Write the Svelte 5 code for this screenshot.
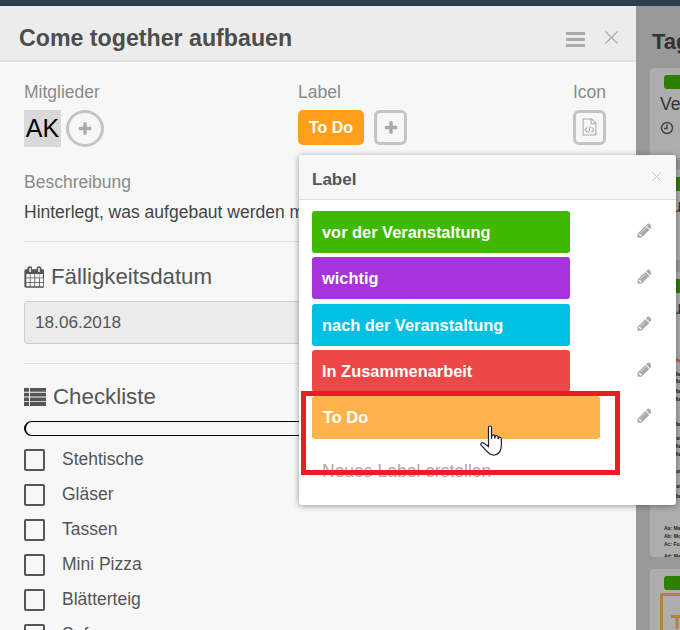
<script>
	const labels = [
		{ name: 'vor der Veranstaltung', color: '#3fb800' },
		{ name: 'wichtig', color: '#a832dc' },
		{ name: 'nach der Veranstaltung', color: '#00c1e4' },
		{ name: 'In Zusammenarbeit', color: '#ed4848' },
		{ name: 'To Do', color: '#ffb34d', hover: true }
	];
	const items = ['Stehtische', 'Gläser', 'Tassen', 'Mini Pizza', 'Blätterteig', 'Sofa'];
	// tiny lines of the card behind the popover, gap = px above the line
	const notes = [
		{ text: 'Wichtig: Abbau', gap: 0, red: true },
		{ text: 'Aa: Material', gap: 9 },
		{ text: 'Ab: Material', gap: 2 },
		{ text: 'Ac: Material', gap: 5 },
		{ text: 'Ad: Material', gap: 3 },
		{ text: 'Ae: Material', gap: 20 },
		{ text: 'Af: Material', gap: 9 },
		{ text: 'Ag: Material', gap: 3 },
		{ text: 'Ah: Material', gap: 3 },
		{ text: 'Ai: Material', gap: 12 },
		{ text: 'Aj: Material', gap: 10 },
		{ text: 'Ak: Material', gap: 5 },
		{ text: 'Aa: Ma', gap: 27 },
		{ text: 'Ab: Mo', gap: 3 },
		{ text: 'Ac: Fu', gap: 3 },
		{ text: 'Ad: Me', gap: 7 }
	];
	const pencil = 'M491 1536l91-91-235-235-91 91v107h128v128h107zm523-928q0-22-22-22-10 0-17 7l-542 542q-7 7-7 17 0 22 22 22 10 0 17-7l542-542q7-7 7-17zm-54-192l416 416-832 832h-416v-416zm683 96q0 53-37 90l-166 166-416-416 166-165q36-38 90-38 53 0 91 38l235 234q37 39 37 91z';
	const plus = 'M1600 736v192q0 40-28 68t-68 28h-416v416q0 40-28 68t-68 28h-192q-40 0-68-28t-28-68v-416h-416q-40 0-68-28t-28-68v-192q0-40 28-68t68-28h416v-416q0-40 28-68t68-28h192q40 0 68 28t28 68v416h416q40 0 68 28t28 68z';
	const calendar = 'M192 1664h288v-288h-288v288zm352 0h320v-288h-320v288zm-352-352h288v-320h-288v320zm352 0h320v-320h-320v320zm-352-384h288v-288h-288v288zm736 736h320v-288h-320v288zm-384-736h320v-288h-320v288zm768 736h288v-288h-288v288zm-384-352h320v-320h-320v320zm-352-864v-288q0-13-9.5-22.5t-22.5-9.5h-64q-13 0-22.5 9.5t-9.5 22.5v288q0 13 9.5 22.5t22.5 9.5h64q13 0 22.5-9.5t9.5-22.5zm736 864h288v-320h-288v320zm-384-384h320v-288h-320v288zm352 0h288v-288h-288v288zm32-480v-288q0-13-9.5-22.5t-22.5-9.5h-64q-13 0-22.5 9.5t-9.5 22.5v288q0 13 9.5 22.5t22.5 9.5h64q13 0 22.5-9.5t9.5-22.5zm384-64v1280q0 52-38 90t-90 38h-1408q-52 0-90-38t-38-90v-1280q0-52 38-90t90-38h128v-96q0-66 47-113t113-47h64q66 0 113 47t47 113v96h384v-96q0-66 47-113t113-47h64q66 0 113 47t47 113v96h128q52 0 90 38t38 90z';
</script>

<div class="page">
	<div class="topbar"></div>
	<div class="main">
		<section class="modal">
			<header class="modal-head">
				<h2>Come together aufbauen</h2>
				<svg class="burger" viewBox="0 0 19 15" width="19" height="15"><rect width="19" height="3" /><rect y="6" width="19" height="3" /><rect y="12" width="19" height="3" /></svg>
				<svg class="close" viewBox="0 0 13 13" width="13" height="13"><path d="M.5.5l12 12M12.5.5l-12 12" /></svg>
			</header>

			<div class="modal-body">
				<div class="meta">
					<div>
						<div class="meta-title">Mitglieder</div>
						<div class="meta-row">
							<span class="avatar">AK</span>
							<button class="add round" aria-label="Mitglied"><svg viewBox="0 0 1792 1792" width="16" height="16"><path d={plus} /></svg></button>
						</div>
					</div>
					<div>
						<div class="meta-title">Label</div>
						<div class="meta-row wide">
							<span class="chip">To Do</span>
							<button class="add" aria-label="Label"><svg viewBox="0 0 1792 1792" width="16" height="16"><path d={plus} /></svg></button>
						</div>
					</div>
					<div>
						<div class="meta-title">Icon</div>
						<div class="meta-row">
							<button class="add" aria-label="Icon">
								<svg viewBox="0 0 14 16" width="15" height="18" class="file">
									<path d="M1 .5h8l4 4v11H1z" />
									<path d="M8.500 .5v4.500H13" />
									<path d="M5 8l-2 2.500L5 13M9 8l2 2.500L9 13M7.800 7.500l-1.600 6" />
								</svg>
							</button>
						</div>
					</div>
				</div>

				<div class="desc">
					<div class="meta-title">Beschreibung</div>
					<p>Hinterlegt, was aufgebaut werden muss</p>
				</div>

				<div class="block">
					<h3>
						<svg viewBox="0 0 1664 1792" width="20" height="22"><path d={calendar} /></svg>
						Fälligkeitsdatum
					</h3>
					<div class="date">18.06.2018</div>
				</div>

				<div class="block check">
					<h3>
						<svg viewBox="0 0 22 18" width="22" height="18"><path d="M0 0h5v3.800H0zM6 0h16v3.800H6zM0 4.700h5v3.800H0zM6 4.700h16v3.800H6zM0 9.400h5v3.800H0zM6 9.400h16v3.800H6zM0 14.100h5v3.900H0zM6 14.100h16v3.900H6z" /></svg>
						Checkliste
					</h3>
					<div class="progress"></div>
					<ul>
						{#each items as item}
							<li><span class="box"></span>{item}</li>
						{/each}
					</ul>
				</div>
			</div>
		</section>

		<aside class="board">
			<h2>Tag</h2>
			<div class="card first">
				<span class="tag"></span>
				<div class="card-title">Ve</div>
				<svg class="clock" viewBox="0 0 14 14" width="14" height="14"><circle cx="7" cy="7" r="5.500" /><path d="M7 3.500V7.500H4" /></svg>
			</div>
			<div class="card second">
				<span class="tag"></span>
				<div class="card-title">Aufbau</div>
			</div>
			<div class="card third">
				<span class="tag"></span>
				<div class="card-title">Aufbau</div>
				<div class="tiny">
					{#each notes as note}
						<span class:red={note.red} style="margin-top: {note.gap}px">{note.text}</span>
					{/each}
				</div>
			</div>
			<div class="card fourth">
				<span class="tag"></span>
				<div class="frame"><svg viewBox="0 0 12 14" width="12" height="14"><path d="M0 0h12v3H7.500v11h-3V3H0z" /></svg></div>
			</div>
		</aside>
	</div>

	<div class="popover">
		<div class="pop-head">
			<strong>Label</strong>
			<svg viewBox="0 0 9 9" width="9" height="9"><path d="M.5.5l8 8M8.500.5l-8 8" /></svg>
		</div>
		<div class="pop-body">
			{#each labels as label}
				<div class="label-row">
					<div class="label-bar" class:hover={label.hover} style="background: {label.color}">{label.name}</div>
					<svg viewBox="0 0 1515 1792" width="15" height="17"><path d={pencil} /></svg>
				</div>
			{/each}
			<div class="new-label">Neues Label erstellen</div>
		</div>
		<div class="callout"></div>
		<svg class="hand" viewBox="0 0 26 33" width="26" height="33">
			<path d="M8.500 2.500c0-2 3-2 3 0v11.500l.3-3c.2-1.600 2.900-1.400 2.900.3l.1 2.200.4-1.800c.3-1.500 2.800-1.200 2.800.4l.1 1.900.5-1.100c.5-1.100 2.500-.8 2.600.6.300 3 .3 7.500-.4 10.500-.8 3.300-2.500 5.500-6.300 6-3.500.5-5.400-1-7.300-3.300L1.300 20.300c-1.300-1.500.6-3.400 2.300-2.400L8.500 21.500z" />
		</svg>
	</div>
</div>

<style>
	:global(body) {
		margin: 0;
		font-family: "Liberation Sans", Arial, sans-serif;
	}

	.page {
		position: relative;
		width: 680px;
		height: 630px;
		overflow: hidden;
		background: #999;
	}

	.topbar {
		height: 6px;
		background: #2c3e50;
	}

	.main {
		display: flex;
		height: 624px;
	}

	.modal {
		flex: 0 0 636px;
		background: #f7f7f7;
		color: #555;
		overflow: hidden;
	}

	.modal-head {
		display: flex;
		align-items: center;
		height: 56px;
		padding: 8px 18px 0 19px;
		background: #ececec;
		border-bottom: 2px solid #e0e0e0;
		box-sizing: border-box;
	}

	.modal-head h2 {
		flex: 1;
		margin: 4px 0 0;
		font-size: 23.200px;
		line-height: 1;
		color: #4d4d4d;
	}

	.burger {
		fill: #aaa;
		margin-top: 5px;
	}

	.close {
		margin-left: 20px;
		stroke: #aaa;
		stroke-width: 1.200;
		fill: none;
	}

	.modal-body {
		padding: 20px 24px 0;
	}

	.meta {
		display: grid;
		grid-template-columns: 274px 275px auto;
	}

	.meta-title {
		font-size: 17.500px;
		line-height: 20px;
		color: #8a8a8a;
	}

	.meta-row {
		display: flex;
		align-items: flex-start;
		gap: 5px;
		margin-top: 8px;
		height: 37px;
	}

	.meta-row.wide {
		gap: 10px;
	}

	.avatar {
		width: 37px;
		height: 37px;
		background: #d9d9d9;
		color: #000;
		font-size: 25px;
		line-height: 37px;
		text-align: center;
	}

	.add {
		display: flex;
		align-items: center;
		justify-content: center;
		width: 33px;
		height: 35px;
		padding: 0;
		background: #f7f7f7;
		border: 3px solid #c4c4c4;
		border-radius: 6px;
		box-sizing: border-box;
	}

	.add.round {
		width: 38px;
		height: 37px;
		border-radius: 50%;
	}

	.add svg {
		fill: #aaa;
	}

	.add .file {
		fill: none;
		stroke: #aaa;
		stroke-width: 1;
		margin-top: -2px;
	}

	.chip {
		width: 66px;
		height: 35px;
		background: #ff9f1a;
		border-radius: 5px;
		color: #fff;
		font-size: 16px;
		font-weight: 700;
		line-height: 35px;
		text-align: center;
	}

	.desc {
		margin-top: 25px;
	}

	.desc p {
		margin: 11px 0 0;
		font-size: 17.500px;
		line-height: 19px;
		color: #444;
		white-space: nowrap;
	}

	.block {
		margin-top: 19px;
		padding-top: 21px;
		border-top: 1px solid #ddd;
	}

	.block.check {
		padding-top: 19px;
	}

	.block h3 {
		display: flex;
		align-items: center;
		gap: 7px;
		margin: 0;
		font-size: 22.300px;
		line-height: 28px;
		font-weight: 400;
		color: #555;
	}

	.block h3 svg {
		fill: #555;
	}

	.date {
		height: 41px;
		margin-top: 10px;
		padding-left: 10px;
		background: #ebebeb;
		border: 1px solid #ccc;
		border-radius: 4px;
		font-size: 17.200px;
		line-height: 41px;
		color: #555;
	}

	.check ul {
		list-style: none;
		margin: 6px 0 0;
		padding: 0;
	}

	.progress {
		height: 15px;
		margin-top: 10px;
		border: 1px solid #000;
		border-left-width: 2px;
		border-radius: 8px;
		box-sizing: border-box;
	}

	.check li {
		display: flex;
		align-items: center;
		height: 35px;
		font-size: 17.500px;
		color: #555;
	}

	.box {
		width: 21px;
		height: 22px;
		margin-right: 17px;
		border: 2px solid #555;
		border-radius: 2px;
		box-sizing: border-box;
	}

	.board {
		flex: 1;
		padding-left: 14px;
		overflow: hidden;
		white-space: nowrap;
	}

	.board h2 {
		margin: 0;
		padding: 24px 0 0 2px;
		height: 38px;
		font-size: 22px;
		line-height: 24px;
		color: #333;
	}

	.card {
		width: 60px;
		margin-bottom: 12px;
		padding: 7px 0 0 14px;
		background: #adadad;
		border-radius: 4px;
		box-sizing: border-box;
	}

	.card.first { height: 90px; }
	.card.second { height: 90px; }
	.card.third { height: 285px; overflow: hidden; }
	.card.fourth { height: 70px; padding-left: 10px; }

	.tag {
		display: block;
		width: 50px;
		height: 14px;
		background: #2e8000;
		border-radius: 3px;
	}

	.fourth .tag {
		margin-left: 4px;
	}

	.card-title {
		margin: 5px 0 0 -4px;
		font-size: 17.500px;
		line-height: 20px;
		color: #333;
	}

	.clock {
		margin-top: 7px;
		margin-left: -4px;
		fill: none;
		stroke: #444;
		stroke-width: 1.500;
	}

	.tiny {
		display: flex;
		flex-direction: column;
		padding-top: 40px;
		font-size: 5px;
		line-height: 5px;
		font-weight: 700;
		color: #222;
	}

	.tiny .red {
		color: #c8102e;
	}

	.frame {
		width: 60px;
		height: 60px;
		margin-top: 3px;
		padding: 19px 0 0 8px;
		border: 3px solid #b5803f;
		border-radius: 2px;
		box-sizing: border-box;
	}

	.frame svg {
		fill: #b5803f;
	}

	.popover {
		position: absolute;
		left: 299px;
		top: 155px;
		width: 377px;
		height: 350px;
		background: #fff;
		border-radius: 3px;
		box-shadow: 0 1px 6px rgba(0, 0, 0, 0.4);
	}

	.pop-head {
		display: flex;
		align-items: center;
		justify-content: space-between;
		height: 45px;
		padding: 5px 15px 0 13px;
		background: #f7f7f7;
		border-bottom: 1px solid #ddd;
		border-radius: 3px 3px 0 0;
		box-sizing: border-box;
	}

	.pop-head strong {
		font-size: 17px;
		color: #555;
	}

	.pop-head svg {
		stroke: #bbb;
		fill: none;
		stroke-width: 1;
		margin-top: -7px;
	}

	.pop-body {
		padding: 11px 0 0 13px;
	}

	.label-row {
		position: relative;
		width: 258px;
		margin-bottom: 4.300px;
	}

	.label-row svg {
		position: absolute;
		top: 11px;
		left: 324px;
		fill: #aaa;
	}

	.label-bar {
		height: 42px;
		padding-left: 10px;
		border-radius: 3px;
		color: #fff;
		font-size: 16.400px;
		font-weight: 700;
		line-height: 42px;
		box-sizing: border-box;
	}

	.label-bar.hover {
		width: 288px;
		height: 43px;
		padding-left: 11px;
	}

	.new-label {
		margin-top: 22px;
		padding-left: 10px;
		font-size: 17.500px;
		line-height: 20px;
		color: #aaa;
	}

	.callout {
		position: absolute;
		left: 2px;
		top: 236px;
		width: 319px;
		height: 84px;
		border: 5px solid #ed1c24;
		box-sizing: border-box;
	}

	.hand {
		position: absolute;
		left: 181px;
		top: 270px;
		fill: #fff;
		stroke: #1c2233;
		stroke-width: 1.200;
	}
</style>
